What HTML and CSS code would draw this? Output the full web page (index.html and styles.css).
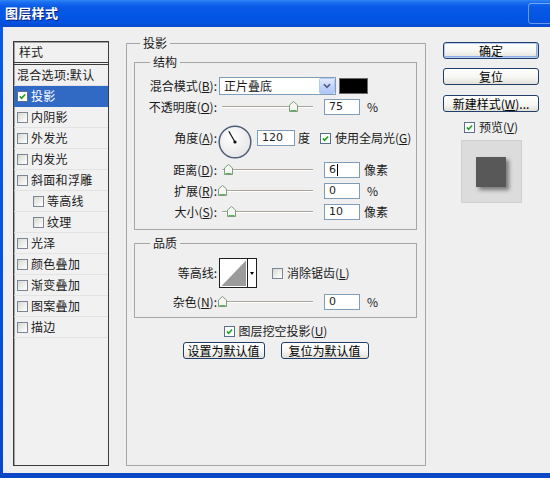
FILE: index.html
```html
<!DOCTYPE html>
<html lang="zh-CN">
<head>
<meta charset="utf-8">
<title>图层样式</title>
<link rel="stylesheet" href="styles.css">
</head>
<body>
<div class="window">
  <div class="titlebar">
    <span class="title">图层样式</span>
    <span class="tb-btn"></span>
  </div>
  <div class="client">
    <div class="stylelist">
      <div class="sl-head">样式</div>
      <div class="sl-row">混合选项:默认</div>
      <div class="sl-row sel"><span class="cb on"><svg viewBox="0 0 11 11"><path d="M2.3 5.4 L4.4 7.6 L8.7 3"/></svg></span>投影</div>
      <div class="sl-row"><span class="cb"></span>内阴影</div>
      <div class="sl-row"><span class="cb"></span>外发光</div>
      <div class="sl-row"><span class="cb"></span>内发光</div>
      <div class="sl-row"><span class="cb"></span>斜面和浮雕</div>
      <div class="sl-row sub"><span class="cb"></span>等高线</div>
      <div class="sl-row sub"><span class="cb"></span>纹理</div>
      <div class="sl-row"><span class="cb"></span>光泽</div>
      <div class="sl-row"><span class="cb"></span>颜色叠加</div>
      <div class="sl-row"><span class="cb"></span>渐变叠加</div>
      <div class="sl-row"><span class="cb"></span>图案叠加</div>
      <div class="sl-row"><span class="cb"></span>描边</div>
    </div>

    <fieldset class="group main">
      <legend class="lg-main">投影</legend>

      <fieldset class="group sub-group struct">
        <legend class="lg-sub">结构</legend>
        <div class="row">
          <span class="lbl">混合模式(<u>B</u>):</span>
          <div class="select">
            <span class="sel-text">正片叠底</span>
            <span class="sel-btn"><svg viewBox="0 0 15 16"><path d="M4 6 L7.5 9.5 L11 6"/></svg></span>
          </div>
          <span class="swatch"></span>
        </div>
        <div class="row">
          <span class="lbl">不透明度(<u>O</u>):</span>
          <div class="slider"><span class="track"></span><span class="thumb" style="left:70px"><svg viewBox="0 0 9 11"><path class="th-body" d="M0.5 4 L4.5 0.5 L8.5 4 V10.5 H0.5 Z"/><path class="th-line" d="M1.5 9.5 H7.5"/></svg></span></div>
          <span class="num">75</span>
          <span class="unit">%</span>
        </div>
        <div class="row row-angle">
          <span class="lbl">角度(<u>A</u>):</span>
          <svg class="dial" viewBox="0 0 34 34">
            <defs><radialGradient id="dg" cx="40%" cy="35%" r="70%"><stop offset="0" stop-color="#ffffff"/><stop offset="1" stop-color="#e4e4e4"/></radialGradient></defs>
            <circle cx="17" cy="17" r="15.8" fill="url(#dg)" stroke="#4e5d78" stroke-width="1.5"/>
            <line x1="17" y1="17" x2="10.8" y2="6.2" stroke="#111" stroke-width="1.2"/>
            <circle cx="17" cy="17" r="1.6" fill="#111"/>
          </svg>
          <span class="num num-angle">120</span>
          <span class="unit unit-deg">度</span>
          <span class="check global"><span class="cb on"><svg viewBox="0 0 11 11"><path d="M2.3 5.4 L4.4 7.6 L8.7 3"/></svg></span>使用全局光(<u>G</u>)</span>
        </div>
        <div class="row">
          <span class="lbl">距离(<u>D</u>):</span>
          <div class="slider"><span class="track"></span><span class="thumb" style="left:5px"><svg viewBox="0 0 9 11"><path class="th-body" d="M0.5 4 L4.5 0.5 L8.5 4 V10.5 H0.5 Z"/><path class="th-line" d="M1.5 9.5 H7.5"/></svg></span></div>
          <span class="num">6<span class="caret"></span></span>
          <span class="unit px">像素</span>
        </div>
        <div class="row">
          <span class="lbl">扩展(<u>R</u>):</span>
          <div class="slider"><span class="track"></span><span class="thumb" style="left:-1px"><svg viewBox="0 0 9 11"><path class="th-body" d="M0.5 4 L4.5 0.5 L8.5 4 V10.5 H0.5 Z"/><path class="th-line" d="M1.5 9.5 H7.5"/></svg></span></div>
          <span class="num">0</span>
          <span class="unit">%</span>
        </div>
        <div class="row">
          <span class="lbl">大小(<u>S</u>):</span>
          <div class="slider"><span class="track"></span><span class="thumb" style="left:8px"><svg viewBox="0 0 9 11"><path class="th-body" d="M0.5 4 L4.5 0.5 L8.5 4 V10.5 H0.5 Z"/><path class="th-line" d="M1.5 9.5 H7.5"/></svg></span></div>
          <span class="num">10</span>
          <span class="unit px">像素</span>
        </div>
      </fieldset>

      <fieldset class="group sub-group quality">
        <legend class="lg-sub">品质</legend>
        <div class="row row-contour">
          <span class="lbl">等高线:</span>
          <div class="contour">
            <svg class="ct-prev" viewBox="0 0 27 28"><polygon points="1.5,27 26,1.5 26,27" fill="#9b9b9b"/></svg>
            <span class="ct-arrow"><span class="ct-tri"></span></span>
          </div>
          <span class="check anti"><span class="cb"></span>消除锯齿(<u>L</u>)</span>
        </div>
        <div class="row row-noise">
          <span class="lbl">杂色(<u>N</u>):</span>
          <div class="slider"><span class="track"></span><span class="thumb" style="left:-1px"><svg viewBox="0 0 9 11"><path class="th-body" d="M0.5 4 L4.5 0.5 L8.5 4 V10.5 H0.5 Z"/><path class="th-line" d="M1.5 9.5 H7.5"/></svg></span></div>
          <span class="num">0</span>
          <span class="unit">%</span>
        </div>
      </fieldset>

      <div class="knock">
        <span class="check"><span class="cb on"><svg viewBox="0 0 11 11"><path d="M2.3 5.4 L4.4 7.6 L8.7 3"/></svg></span>图层挖空投影(<u>U</u>)</span>
      </div>
      <div class="defaults">
        <button class="btn btn-def1">设置为默认值</button>
        <button class="btn btn-def2">复位为默认值</button>
      </div>
    </fieldset>

    <div class="side">
      <button class="btn btn-side btn-ok">确定</button>
      <button class="btn btn-side btn-reset">复位</button>
      <button class="btn btn-side btn-new">新建样式(<u>W</u>)...</button>
      <span class="check preview-check"><span class="cb on"><svg viewBox="0 0 11 11"><path d="M2.3 5.4 L4.4 7.6 L8.7 3"/></svg></span>预览(<u>V</u>)</span>
      <div class="preview"><div class="preview-sq"></div></div>
    </div>
  </div>
</div>
</body>
</html>
```

FILE: styles.css
```css
* { box-sizing: border-box; }
html, body { margin: 0; padding: 0; }
body {
  width: 550px;
  height: 478px;
  overflow: hidden;
  font-family: "Noto Sans CJK SC", "Noto Sans", sans-serif;
  font-size: 12px;
  line-height: 14px;
  color: #1a1a1a;
  background: #0a4fd2;
}
u { text-decoration: underline; text-underline-offset: 1px; }

.window {
  width: 550px;
  height: 478px;
  display: flex;
  flex-direction: column;
  background: linear-gradient(180deg, #0a5ae4 0%, #0551dc 60%, #0a47c6 100%);
}

.titlebar {
  position: relative;
  height: 27px;
  flex: none;
  display: flex;
  align-items: center;
  padding: 0 0 2px 5px;
  background: linear-gradient(180deg, #2f86f5 0%, #1a6cf0 10%, #0a5ae6 25%, #0355e4 55%, #0452e0 85%, #0a48c8 100%);
  overflow: hidden;
}
.title {
  color: #fff;
  font-size: 13px;
  font-weight: bold;
  letter-spacing: 0.3px;
  text-shadow: 1px 1px 0 #0a1f7e;
}
.tb-btn {
  position: absolute;
  right: -12px;
  top: 3px;
  width: 34px;
  height: 21px;
  border: 1px solid rgba(255, 255, 255, 0.4);
  border-radius: 3px;
}

.client {
  flex: none;
  height: 446px;
  margin-left: 3px;
  background: #efefef;
  display: flex;
  align-items: flex-start;
  padding-left: 10px;
}

/* ---------- style list ---------- */
.stylelist {
  margin-top: 14px;
  width: 96px;
  height: 425px;
  border: 1px solid #3c3c3c;
  box-shadow: inset 1px 1px 0 #a0a0a0;
  background: #f1f1f1;
  flex: none;
}
.sl-head {
  height: 23px;
  line-height: 20px;
  padding-left: 5px;
  border-bottom: 3px double #3c3c3c;
}
.sl-row {
  height: 21px;
  display: flex;
  align-items: center;
  padding-left: 3px;
  border-bottom: 1px solid #e3e3e3;
  white-space: nowrap;
  letter-spacing: 0.3px;
}
.sl-row .cb { margin-right: 3px; }
.sl-row.sub { padding-left: 19px; }
.sl-row.sel { background: #316ac5; color: #fff; border-bottom-color: #316ac5; }

/* ---------- checkboxes ---------- */
.cb {
  display: inline-block;
  flex: none;
  width: 11px;
  height: 11px;
  border: 1px solid #7c8595;
  background: linear-gradient(135deg, #d9d9d3 0%, #f4f4f2 70%, #ffffff 100%);
}
.cb.on { border-color: #5a6e8e; background: #fff; }
.cb svg { display: block; width: 9px; height: 9px; }
.cb svg path { fill: none; stroke: #21a121; stroke-width: 2; }
.check { display: inline-flex; align-items: center; white-space: nowrap; }
.check .cb { margin-right: 4px; }

/* ---------- groups ---------- */
.group {
  margin: 0;
  min-width: 0;
  border: 1px solid #a6a6a6;
}
.group legend { font-size: 12px; line-height: 14px; }
.main {
  flex: none;
  margin: 9px 0 0 17px;
  width: 300px;
  height: 430px;
  padding: 5px 8px 0 7px;
}
.lg-main { margin-left: 6px; padding: 0 3px; }
.sub-group { padding: 6px 0 7px 0; }
.lg-sub { margin-left: 15px; padding: 0 3px; }
.quality { margin-top: 6px; padding: 8px 0 5px 0; }

.row {
  height: 21px;
  display: flex;
  align-items: center;
  white-space: nowrap;
}
.row-angle { height: 42px; }
.row-contour { height: 30px; }
.row-noise { margin-top: 3px; }
.lbl {
  flex: none;
  width: 82px;
  margin-right: 2px;
  text-align: right;
}

/* select */
.select {
  flex: none;
  width: 117px;
  height: 18px;
  border: 1px solid #7f9db9;
  background: #fff;
  display: flex;
  align-items: center;
  justify-content: space-between;
}
.sel-text { padding-left: 4px; }
.sel-btn {
  width: 16px;
  height: 16px;
  border: 1px solid #b5c8f2;
  border-radius: 2px;
  background: linear-gradient(180deg, #e2eafe 0%, #c6d5fb 50%, #b1c6f5 100%);
}
.sel-btn svg { display: block; width: 14px; height: 14px; }
.sel-btn path { fill: none; stroke: #4d6185; stroke-width: 2; }
.swatch {
  flex: none;
  margin-left: 3px;
  width: 29px;
  height: 16px;
  background: #000;
  border: 1px solid #6a6a6a;
}

/* slider */
.slider {
  position: relative;
  flex: none;
  width: 105px;
  height: 21px;
  display: flex;
  align-items: center;
  padding-left: 3px;
}
.track {
  width: 91px;
  height: 2px;
  border-top: 1px solid #aaa39a;
  border-bottom: 1px solid #ffffff;
}
.thumb { position: absolute; top: 5px; width: 9px; height: 11px; }
.thumb svg { display: block; width: 9px; height: 11px; }
.th-body { fill: #f6f7f2; stroke: #7d9c80; stroke-width: 1; }
.th-line { stroke: #5bb35b; stroke-width: 1; }

/* number inputs */
.num {
  flex: none;
  width: 36px;
  height: 16px;
  border: 1px solid #7f9db9;
  background: #fff;
  padding-left: 4px;
  font-family: "DejaVu Sans", "Liberation Sans", sans-serif;
  font-size: 11px;
  line-height: 14px;
  color: #222;
  display: flex;
  align-items: center;
}
.num-angle { width: 38px; margin-left: 5px; }
.caret { display: inline-block; width: 1px; height: 12px; background: #000; margin-left: 1px; }
.unit { margin-left: 7px; }
.unit.px { margin-left: 4px; }
.unit-deg { margin-left: 3px; }
.global { margin-left: 10px; }

.dial { flex: none; width: 34px; height: 34px; margin-left: -1px; margin-top: 8px; }

/* contour */
.contour {
  flex: none;
  width: 38px;
  height: 30px;
  border: 1px solid #1e1e1e;
  background: #fff;
  display: flex;
}
.ct-prev { display: block; width: 27px; height: 28px; }
.ct-arrow {
  width: 9px;
  border-left: 1px solid #1e1e1e;
  display: flex;
  align-items: center;
  justify-content: center;
}
.ct-tri {
  width: 0;
  height: 0;
  border-left: 2.5px solid transparent;
  border-right: 2.5px solid transparent;
  border-top: 3px solid #000;
}
.anti { margin-left: 15px; }

.knock {
  margin-top: 5px;
  height: 16px;
  display: flex;
  justify-content: center;
  align-items: center;
}
.defaults {
  margin-top: 3px;
  display: flex;
  justify-content: center;
  gap: 16px;
}

/* buttons */
.btn {
  height: 17px;
  padding: 0;
  border: 1px solid #1f3f6a;
  border-radius: 3px;
  background: linear-gradient(180deg, #ffffff 0%, #f6f6f3 55%, #e2e0d8 100%);
  font-family: "Noto Sans CJK SC", "Noto Sans", sans-serif;
  font-size: 12px;
  line-height: 14px;
  color: #000;
  white-space: nowrap;
}
.btn-def1 { width: 82px; }
.btn-def2 { width: 88px; }

.side {
  flex: none;
  margin: 15px 0 0 17px;
  width: 96px;
  display: flex;
  flex-direction: column;
  align-items: center;
}
.btn-side { width: 96px; }
.btn-ok { box-shadow: inset 0 0 0 1px #b9cdf3, inset -1px -1px 0 1px #8eaee6; }
.btn-reset { margin-top: 9px; }
.btn-new { margin-top: 10px; }
.preview-check { margin-top: 8px; height: 14px; }
.preview {
  margin-top: 6px;
  width: 61px;
  height: 63px;
  background: #dcdcdc;
  border: 1px solid #d0d0d0;
  display: flex;
  align-items: center;
  justify-content: center;
}
.preview-sq {
  width: 30px;
  height: 30px;
  background: #585858;
  box-shadow: 3px 3px 4px rgba(0, 0, 0, 0.45);
}
```
